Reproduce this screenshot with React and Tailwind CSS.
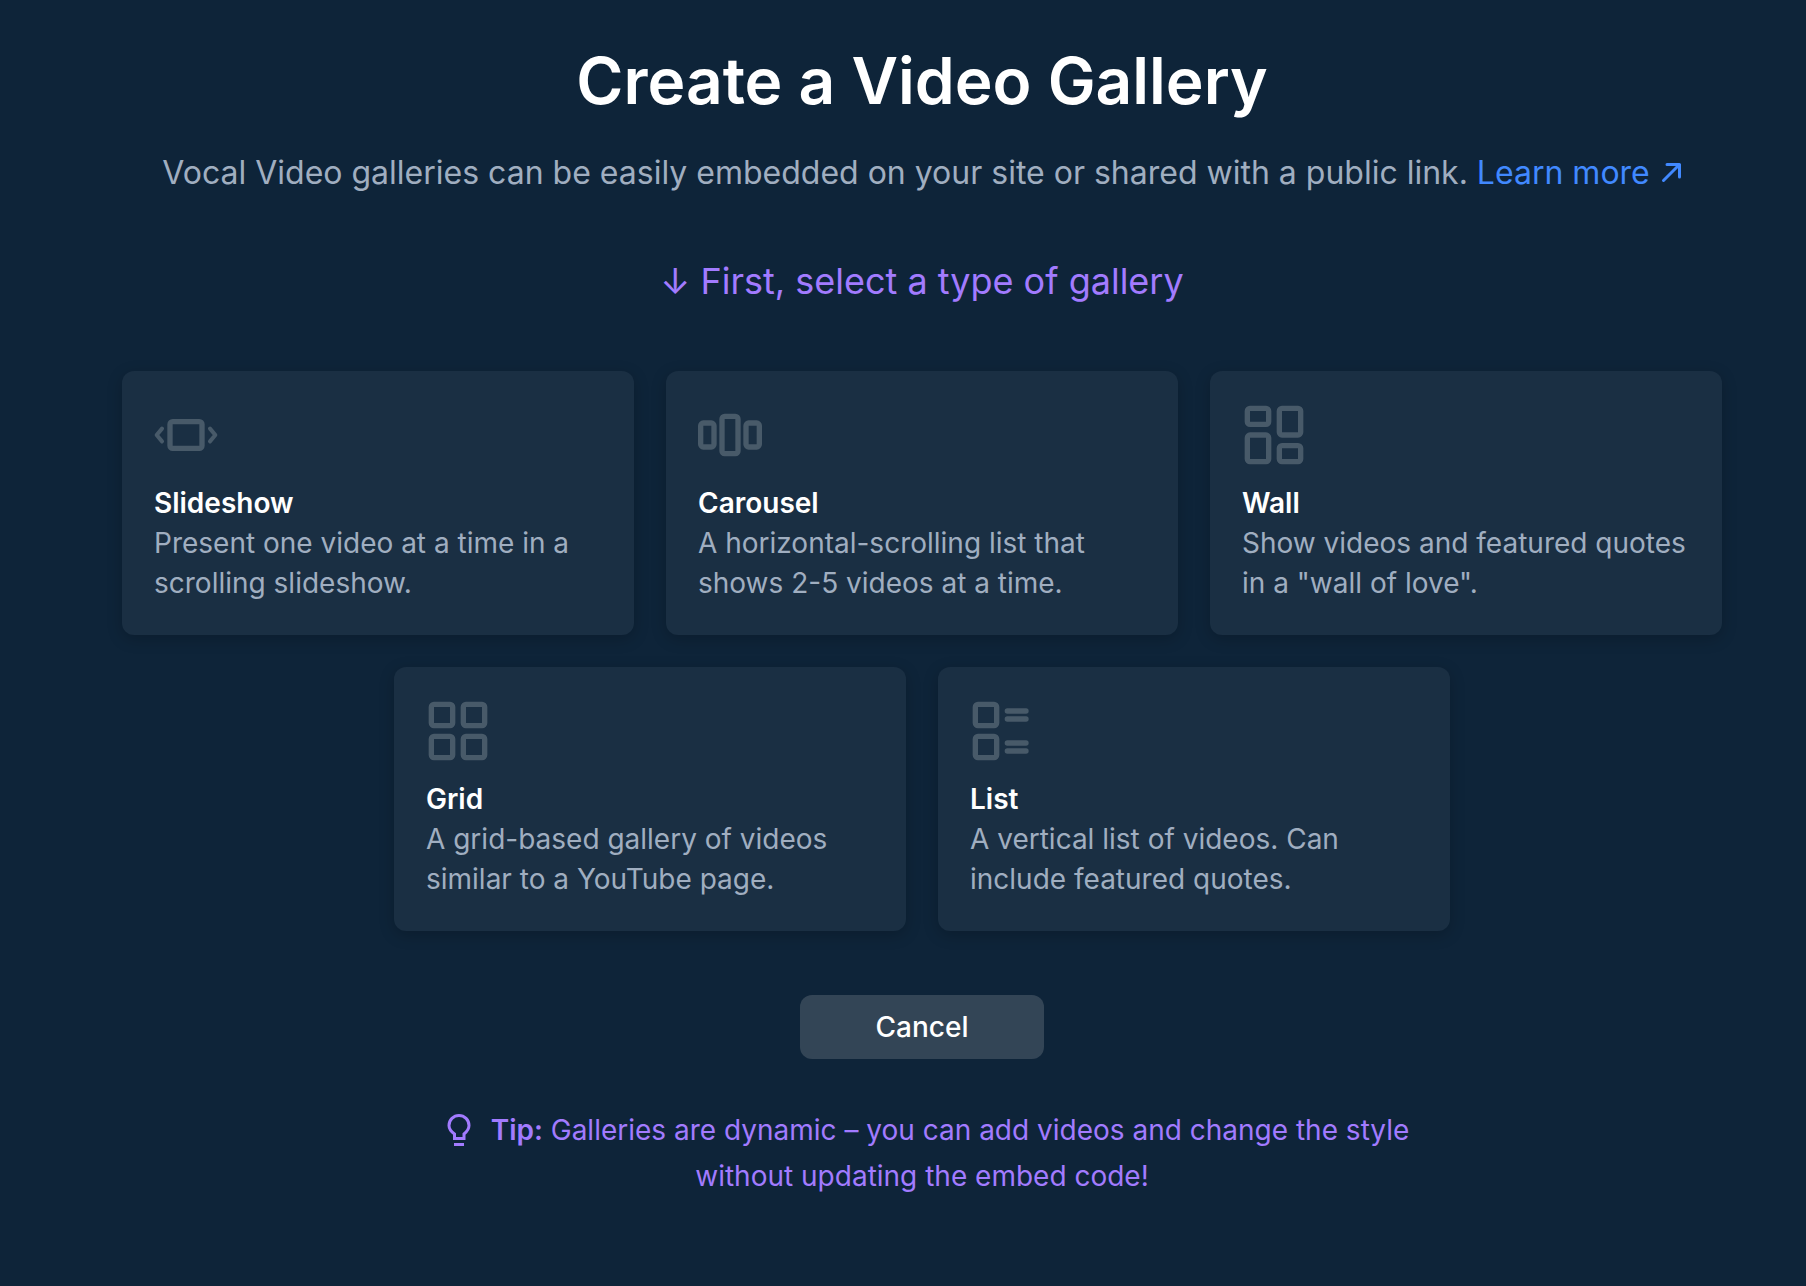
import React from 'react';

const SlideshowIcon = () => (
  <>
    <rect x="6" y="7" width="12" height="10" rx="1" />
    <path d="M3 9.6 1 12l2 2.4M21 9.6l2 2.4-2 2.4" strokeWidth="1.5" />
  </>
);

const CarouselIcon = () => (
  <>
    <rect x="1" y="7.5" width="5" height="9" rx="1" />
    <rect x="9" y="5" width="6" height="14" rx="1" />
    <rect x="18" y="7.5" width="5" height="9" rx="1" />
  </>
);

const WallIcon = () => (
  <>
    <rect x="2" y="2" width="8" height="6" rx="1" />
    <rect x="14" y="2" width="8" height="10" rx="1" />
    <rect x="2" y="12" width="8" height="10" rx="1" />
    <rect x="14" y="16" width="8" height="6" rx="1" />
  </>
);

const GridIcon = () => (
  <>
    <rect x="2" y="2" width="8" height="8" rx="1" />
    <rect x="14" y="2" width="8" height="8" rx="1" />
    <rect x="2" y="14" width="8" height="8" rx="1" />
    <rect x="14" y="14" width="8" height="8" rx="1" />
  </>
);

const ListIcon = () => (
  <>
    <rect x="2" y="2" width="8" height="8" rx="1" />
    <rect x="2" y="14" width="8" height="8" rx="1" />
    <path d="M14 4.5h7M14 7.5h7M14 16.5h7M14 19.5h7" />
  </>
);

const galleryTypes = [
  { name: 'Slideshow', description: 'Present one video at a time in a scrolling slideshow.', Icon: SlideshowIcon },
  { name: 'Carousel', description: 'A horizontal-scrolling list that shows 2-5 videos at a time.', Icon: CarouselIcon },
  { name: 'Wall', description: 'Show videos and featured quotes in a "wall of love".', Icon: WallIcon },
  { name: 'Grid', description: 'A grid-based gallery of videos similar to a YouTube page.', Icon: GridIcon },
  { name: 'List', description: 'A vertical list of videos. Can include featured quotes.', Icon: ListIcon },
];

const GalleryCard = ({ name, description, Icon }) => (
  <button
    type="button"
    className="flex w-full max-w-lg flex-col items-start rounded-xl bg-[#1a2f43] p-8 text-left text-[28px] leading-10 shadow-[0_4px_16px_rgba(0,0,0,0.2)] hover:bg-[#24394f]"
  >
    <svg
      viewBox="0 0 24 24"
      className="mb-4 size-16 text-[#485a69]"
      fill="none"
      stroke="currentColor"
      strokeWidth="2"
      strokeLinecap="round"
      strokeLinejoin="round"
      aria-hidden="true"
    >
      <Icon />
    </svg>
    <span className="font-semibold text-white">{name}</span>
    <span className="text-[#a0aec0]">{description}</span>
  </button>
);

const App = () => (
  <main className="flex min-h-screen flex-col items-center bg-[#0e2439] pt-[41px] pr-[42px] pb-20 pl-20 font-['Inter',sans-serif]">
    <h1 className="text-center text-[64px] leading-20 font-semibold text-white">Create a Video Gallery</h1>
    <p className="mt-7 text-center text-[32px] leading-12 text-[#a0aec0]">
      Vocal Video galleries can be easily embedded on your site or shared with a public link.{' '}
      <a href="#learn-more" className="whitespace-nowrap text-[#4189ff]">
        Learn more
        <svg
          viewBox="0 0 24 24"
          className="ml-2 inline size-6 align-baseline"
          fill="none"
          stroke="currentColor"
          strokeWidth="3"
          strokeLinecap="round"
          strokeLinejoin="round"
          aria-hidden="true"
        >
          <path d="M5.5 20.5l16-16M9 4.5h12.500V17" />
        </svg>
      </a>
    </p>
    <h2 className="mt-15 text-center text-4xl leading-12 text-[#a27bff]">↓ First, select a type of gallery</h2>
    <div className="mt-[66px] flex w-full max-w-[1600px] flex-wrap justify-center gap-8">
      {galleryTypes.map((type) => (
        <GalleryCard key={type.name} {...type} />
      ))}
    </div>
    <button
      type="button"
      className="mt-16 h-16 w-61 rounded-xl bg-[#334556] text-[28px] font-medium text-white hover:bg-[#3d4f61]"
    >
      Cancel
    </button>
    <p className="mt-12 max-w-5xl text-center text-[28px] leading-[46px] text-[#a27bff]">
      <svg
        viewBox="0 0 24 36"
        className="mr-5 ml-3 inline h-9 w-6 align-middle"
        fill="none"
        stroke="currentColor"
        strokeWidth="3"
        aria-hidden="true"
      >
        <path d="M7.500 24.500V20C4 17.500 2 15 2 11.500a10 10 0 0 1 20 0c0 3.500-2 6-5 8.500v4.500zM7 30.500h10" />
      </svg>
      <strong className="font-semibold">Tip:</strong> Galleries are dynamic – you can add videos and change the style
      without updating the embed code!
    </p>
  </main>
);

export default App;
